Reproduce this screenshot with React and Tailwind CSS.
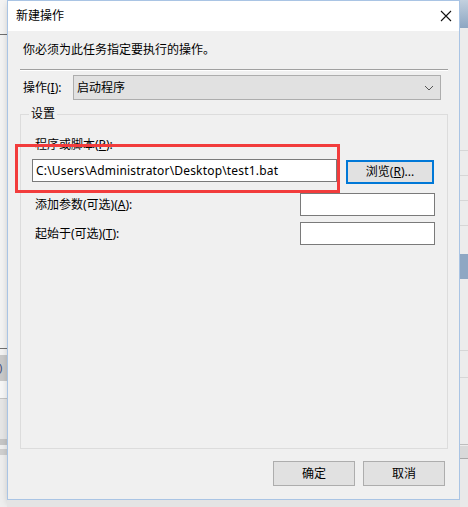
import React from 'react';

const font = { fontFamily: '"Noto Sans", "Noto Sans CJK SC", sans-serif' };

function LeftStrip() {
  return (
    <div className="w-[7px] h-[507px] flex flex-col bg-[#f3f3f3] shrink-0">
      <div className="h-[34px]" />
      <div className="h-px bg-[#6e6e6e]" />
      <div className="h-[313px]" />
      <div className="h-px bg-[#707070]" />
      <div className="h-[6px]" />
      <div className="h-[26px] bg-[#c9c9c9] text-[11px] leading-[26px] text-[#3a4a7a] overflow-hidden whitespace-nowrap">
        <span className="-ml-[1px]">)</span>
      </div>
      <div className="h-[17px] bg-[#f7f7f7]" />
      <div className="h-px bg-[#c4c4c4]" />
      <div className="h-[40px] bg-[#e6e6e6]" />
      <div className="h-[6px] bg-[#c6c6c6]" />
      <div className="h-[4px] bg-[#f0f0f0]" />
      <div className="h-[6px] bg-[#cfcfcf]" />
      <div className="flex-1 bg-[#eeeeee]" />
    </div>
  );
}

function RightStrip() {
  return (
    <div className="w-[8px] h-[507px] flex flex-col bg-[#ececec] shrink-0">
      <div className="h-[28px] bg-gradient-to-b from-[#c3d0de] to-[#8da6c2]" />
      <div className="h-[122px]" />
      <div className="h-px bg-[#d6d6d6]" />
      <div className="h-[24px]" />
      <div className="h-px bg-[#d6d6d6]" />
      <div className="h-[24px]" />
      <div className="h-px bg-[#d6d6d6]" />
      <div className="h-[24px]" />
      <div className="h-px bg-[#d6d6d6]" />
      <div className="h-[28px]" />
      <div className="h-[25px] bg-[#8ea7c3]" />
      <div className="h-[71px]" />
      <div className="h-px bg-[#d6d6d6]" />
      <div className="h-[26px]" />
      <div className="h-px bg-[#d6d6d6]" />
      <div className="h-[66px]" />
      <div className="h-px bg-[#bdbdbd]" />
      <div className="h-px" />
      <div className="h-[12px] bg-[#d9d9d9]" />
      <div className="h-px bg-[#a9a9a9]" />
      <div className="flex-1 bg-[#e9e9e9]" />
    </div>
  );
}

function Field({ className = '', children }) {
  return (
    <div className={`h-[23px] bg-white border border-[#7a7a7a] flex items-center px-[3px] text-[12px] text-black whitespace-nowrap overflow-hidden ${className}`}>
      {children}
    </div>
  );
}

export default function App() {
  return (
    <div className="w-[468px] h-[507px] overflow-hidden flex bg-[#eeeeee] text-black" style={font}>
      <LeftStrip />
      <div className="w-[453px] shrink-0 flex flex-col">
        <div className="h-[500px] flex flex-col border border-[#a9c4e4] bg-[#f0f0f0] shadow-[2px_3px_8px_rgba(0,0,0,0.25)]">
          {/* Title bar */}
          <div className="h-[30px] bg-white flex items-center justify-between pl-[8px] pr-[8px]">
            <span className="text-[12px] leading-none">新建操作</span>
            <svg width="12" height="12" viewBox="0 0 12 12" className="-mr-[1px]">
              <path d="M1 1 L11 11 M11 1 L1 11" stroke="#111" strokeWidth="1.1" />
            </svg>
          </div>

          {/* Instruction */}
          <div className="h-[38px] flex items-center pl-[15px] text-[12px]">你必须为此任务指定要执行的操作。</div>

          {/* Separator */}
          <div className="ml-[12px] mr-[11px]">
            <div className="h-px bg-[#a0a0a0]" />
            <div className="h-px bg-white" />
          </div>

          {/* Action row */}
          <div className="mt-[4px] flex items-center h-[25px]">
            <span className="pl-[15px] w-[65px] text-[12px]">操作(<u>I</u>):</span>
            <div className="w-[368px] h-[25px] bg-[#e1e1e1] border border-[#adadad] flex items-center justify-between pl-[3px] pr-[6px] text-[12px]">
              <span>启动程序</span>
              <svg width="10" height="6" viewBox="0 0 10 6">
                <path d="M1 1 L5 5 L9 1" fill="none" stroke="#555" strokeWidth="1" />
              </svg>
            </div>
          </div>

          {/* Settings group */}
          <div className="relative mt-[14px] ml-[12px] mr-[11px] h-[335px] border border-[#dcdcdc]">
            <span className="absolute -top-[9px] left-[8px] px-[2px] bg-[#f0f0f0] text-[12px] leading-[16px]">设置</span>

            <div className="pt-[22px] pl-[14px] text-[12px] leading-[16px]">程序或脚本(<u>P</u>):</div>
            <div className="mt-[6px] flex items-start">
              <Field className="ml-[11px] w-[305px] tracking-[0.18px]">C:\Users\Administrator\Desktop\test1.bat</Field>
              <button className="ml-[9px] mt-px w-[88px] h-[24px] bg-[#e1e1e1] border-2 border-[#0078d7] text-[12px] leading-none">
                浏览(<u>R</u>)...
              </button>
            </div>

            <div className="mt-[9px] flex items-center">
              <span className="pl-[14px] w-[279px] text-[12px]">添加参数(可选)(<u>A</u>):</span>
              <Field className="w-[135px]" />
            </div>
            <div className="mt-[6px] flex items-center">
              <span className="pl-[14px] w-[279px] text-[12px]">起始于(可选)(<u>T</u>):</span>
              <Field className="w-[135px]" />
            </div>

            {/* annotation */}
            <div className="absolute left-[-6px] top-[29px] w-[325px] h-[49px] border-[3px] border-[#f23c3c]" />
          </div>

          {/* Buttons */}
          <div className="mt-[12px] flex justify-end gap-[8px] pr-[14px]">
            <button className="w-[82px] h-[25px] bg-[#e1e1e1] border border-[#adadad] text-[12px]">确定</button>
            <button className="w-[82px] h-[25px] bg-[#e1e1e1] border border-[#adadad] text-[12px]">取消</button>
          </div>
        </div>
        <div className="flex-1 bg-[#e4e4e4]" />
      </div>
      <RightStrip />
    </div>
  );
}
